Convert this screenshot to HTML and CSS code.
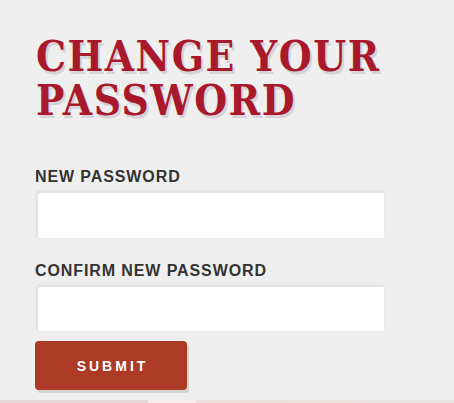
FILE: index.html
```html
<!DOCTYPE html>
<html lang="en">
<head>
    <meta charset="UTF-8">
    <meta name="viewport" content="width=device-width, initial-scale=1.0">
    <title>Change your password</title>
    <link rel="stylesheet" href="styles.css">
</head>
<body>
    <div class="page">
        <h1 class="page-title">CHANGE YOUR PASSWORD</h1>

        <form class="password-form">
            <label class="field-label" for="newPassword">NEW PASSWORD</label>
            <input class="field-input" type="password" id="newPassword">

            <label class="field-label" for="confirmPassword">CONFIRM NEW PASSWORD</label>
            <input class="field-input" type="password" id="confirmPassword">

            <button class="submit-btn" type="submit">SUBMIT</button>
        </form>
    </div>
    <div class="footer-strip"></div>
</body>
</html>
```

FILE: styles.css
```css
* {
    margin: 0;
    padding: 0;
    box-sizing: border-box;
}

body {
    font-family: 'Liberation Sans', Arial, sans-serif;
    background: #efefef;
    color: #333;
    height: 403px;
    overflow: hidden;
}

.page {
    padding: 35px 35px 0 35px;
    height: 400px;
}

.page-title {
    font-family: 'DejaVu Serif Condensed', 'DejaVu Serif', serif;
    font-stretch: condensed;
    font-weight: 700;
    font-size: 42px;
    line-height: 44px;
    letter-spacing: 1.5px;
    color: #a8192b;
    width: 400px;
    text-shadow: 2px 3px 0 #d6d2d8;
    margin-left: 1px;
}

.password-form {
    display: flex;
    flex-direction: column;
    align-items: flex-start;
    margin-top: 45px;
}

.field-label {
    font-weight: 700;
    font-size: 16px;
    letter-spacing: 0.9px;
    line-height: 18px;
    margin-bottom: 4px;
}

.field-input {
    width: 350px;
    height: 49px;
    background: #fff;
    border: 1px solid #ebebeb;
    border-radius: 3px;
    box-shadow: inset 2px 2px 0 #e3e3e3;
    margin-bottom: 23px;
    outline: none;
}

.field-input + .field-label + .field-input {
    height: 48px;
    margin-bottom: 9px;
}

.submit-btn {
    width: 152px;
    height: 49px;
    background: #ab3a27;
    color: #fff;
    border: none;
    border-radius: 4px;
    box-shadow: 2px 3px 0 #d3d3d3;
    font-family: 'Liberation Sans', Arial, sans-serif;
    font-weight: 700;
    font-size: 14px;
    letter-spacing: 3px;
    padding-left: 3px;
    cursor: pointer;
}

.footer-strip {
    height: 3px;
    background: linear-gradient(90deg, #e6d8d8 0, #e6d8d8 148px, #f6eeec 148px, #f6eeec 196px, #ebe0dd 196px, #e8e6e2 100%);
}
```
